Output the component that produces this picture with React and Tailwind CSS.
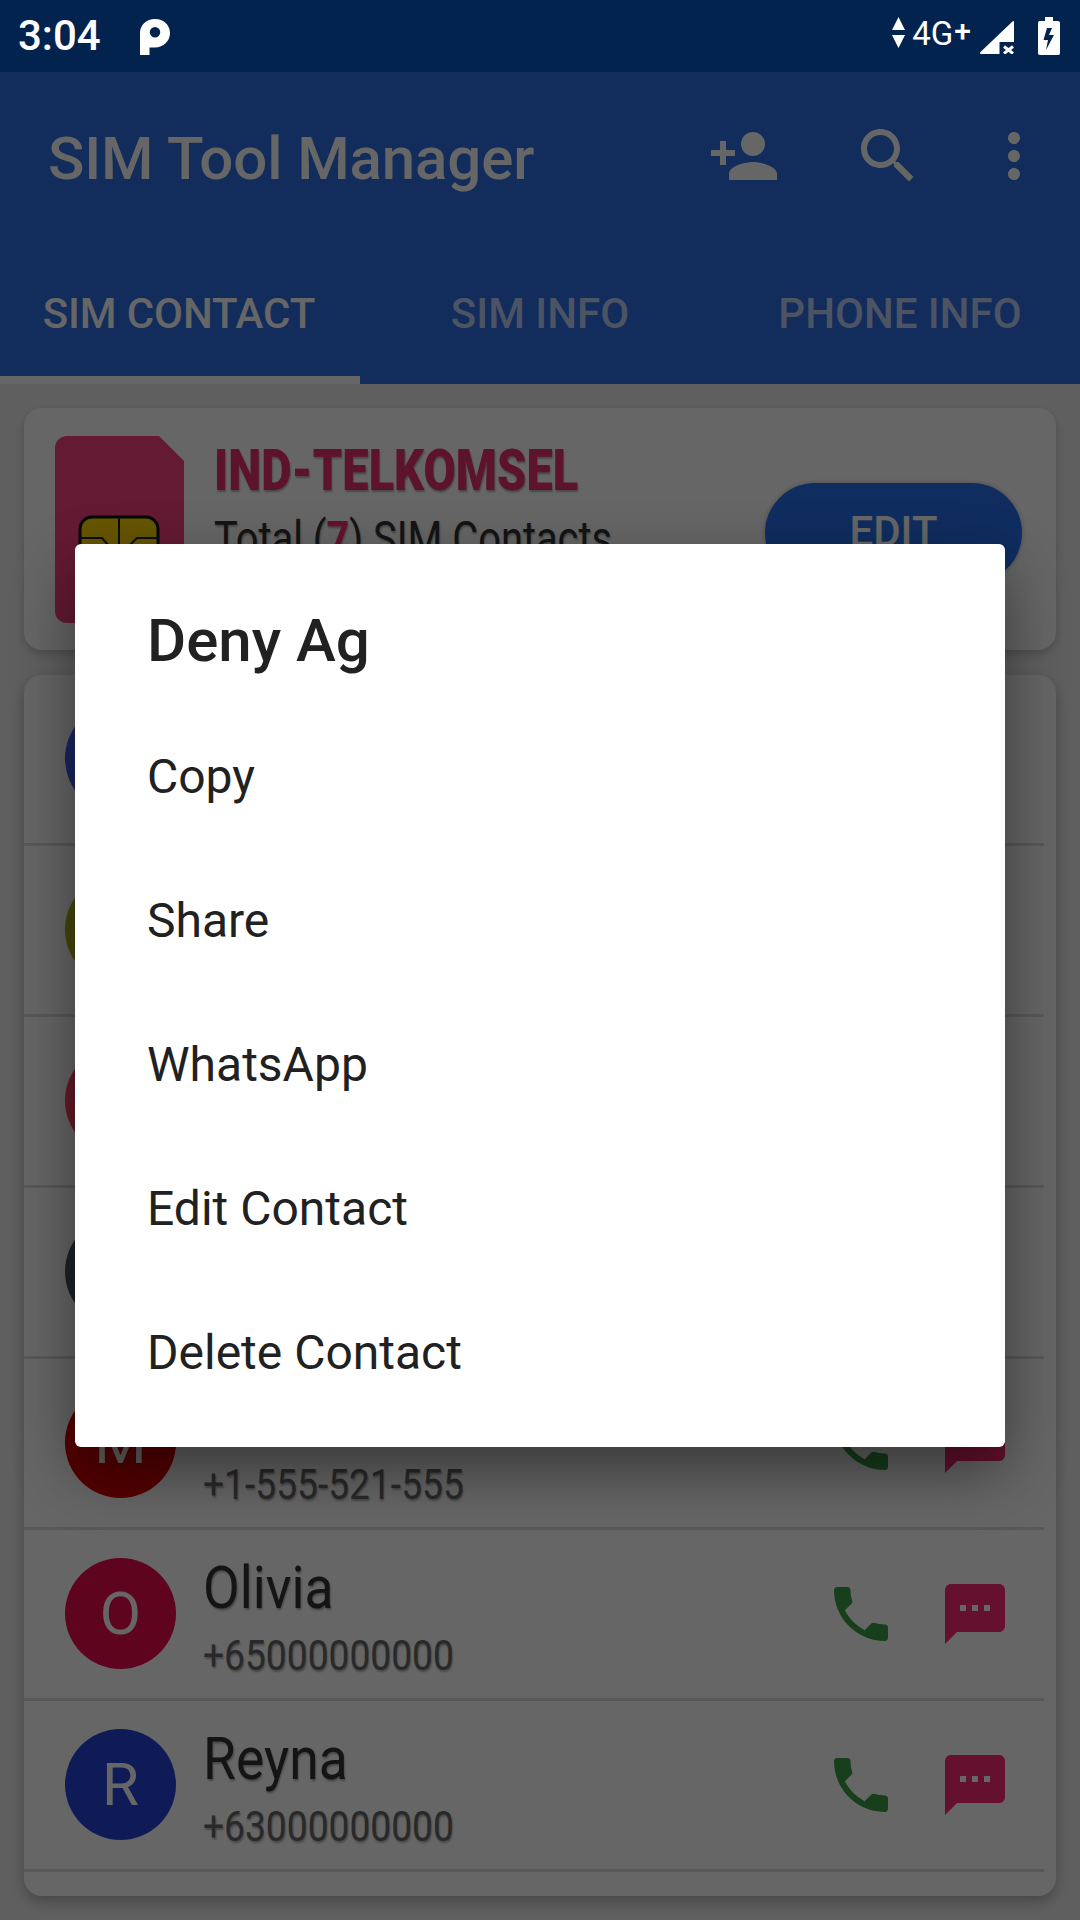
import React from "react";

const contacts = [
  { letter: "D", color: "bg-[#415ff0]", name: "Deny Ag", number: "" },
  { letter: "", color: "bg-[#acb41c]", name: "", number: "" },
  { letter: "", color: "bg-[#ff415f]", name: "", number: "" },
  { letter: "", color: "bg-[#465764]", name: "", number: "" },
  { letter: "M", color: "bg-[#d70000]", name: "", number: "+1-555-521-555" },
  { letter: "O", color: "bg-[#eb0c4e]", name: "Olivia", number: "+65000000000" },
  { letter: "R", color: "bg-[#2344d7]", name: "Reyna", number: "+63000000000" },
];

const menu = ["Copy", "Share", "WhatsApp", "Edit Contact", "Delete Contact"];

const Icon = ({ d, className }) => (
  <svg viewBox="0 0 24 24" className={`w-[72px] h-[72px] shrink-0 ${className}`} fill="currentColor">
    <path d={d} />
  </svg>
);

const StatusBar = () => (
  <div className="h-[72px] bg-[#03234f] flex items-center text-white pl-[18px]">
    <span className="text-[42px] leading-none font-medium">3:04</span>
    <svg viewBox="0 0 30 36" className="w-[30px] h-[36px] ml-[39px] mt-[2px]" fill="white">
      <path
        fillRule="evenodd"
        d="M0 36V14C0 6 6.500 0 15 0s15 6 15 14-6.500 14.500-15 14.500h-5.500V36zM15 8a5 5 0 100 10.500A5 5 0 0015 8z"
      />
    </svg>
    <div className="ml-auto flex items-center pr-[20px]">
      <svg viewBox="0 0 13 31" className="w-[13px] h-[31px] mt-[-7px]" fill="white">
        <path d="M6.500 0L13 13H0zM0 18h13L6.500 31z" />
      </svg>
      <span className="ml-[7px] text-[33px] leading-none mt-[-6px]">4G</span>
      <span className="text-[30px] leading-none font-medium mt-[-11px] ml-[1px]">+</span>
      <svg viewBox="0 0 34 33" className="w-[34px] h-[33px] ml-[9px] mt-[2px]" fill="white">
        <path d="M33 0c.600 0 1 .500 1 1v20H19.500v12H1c-1 0-1.300-1-.500-2z" />
        <path d="M24 25.500l9 7M33 25.500l-9 7" stroke="white" strokeWidth="3" fill="none" />
      </svg>
      <svg viewBox="0 0 22 38" className="w-[22px] h-[38px] ml-[24px] mt-[-1px]" fill="white">
        <path
          fillRule="evenodd"
          d="M7 0h8v4h5c1.500 0 2 1 2 2v30c0 1.500-1 2-2 2H2c-1.500 0-2-1-2-2V6c0-1.500 1-2 2-2h5zM9 11l-3.500 12H10l-2 10 8-15h-5l3-7z"
        />
      </svg>
    </div>
  </div>
);

const AppBar = () => (
  <div className="bg-[#2d6ee6] text-white">
    <div className="h-[168px] flex items-center pl-[48px] pr-[30px]">
      <div className="text-[60px] leading-none font-medium tracking-[-0.1px] mt-[5px]">SIM Tool Manager</div>
      <Icon
        className="ml-auto"
        d="M15 12c2.210 0 4-1.790 4-4s-1.790-4-4-4-4 1.790-4 4 1.790 4 4 4zm-9-2V7H4v3H1v2h3v3h2v-3h3v-2H6zm9 4c-2.670 0-8 1.340-8 4v2h16v-2c0-2.660-5.330-4-8-4z"
      />
      <Icon
        className="ml-[72px]"
        d="M15.500 14h-.790l-.280-.270C15.410 12.590 16 11.110 16 9.500 16 5.910 13.090 3 9.500 3S3 5.910 3 9.500 5.910 16 9.500 16c1.610 0 3.090-.590 4.230-1.570l.270.280v.790l5 4.990L20.490 19l-4.990-5zm-6 0C7.010 14 5 11.990 5 9.500S7.010 5 9.500 5 14 7.010 14 9.500 11.990 14 9.500 14z"
      />
      <Icon
        className="ml-[54px]"
        d="M12 8c1.100 0 2-.900 2-2s-.900-2-2-2-2 .900-2 2 .900 2 2 2zm0 2c-1.100 0-2 .900-2 2s.900 2 2 2 2-.900 2-2-.900-2-2-2zm0 6c-1.100 0-2 .900-2 2s.900 2 2 2 2-.900 2-2-.900-2-2-2z"
      />
    </div>
    <div className="grid grid-cols-3 h-[144px] text-[42px] font-medium">
      <div className="flex items-center justify-center border-b-[8px] border-white pt-[10px] pr-[2px] tracking-[-0.1px]">
        SIM CONTACT
      </div>
      <div className="flex items-center justify-center text-white/70 pt-[2px]">SIM INFO</div>
      <div className="flex items-center justify-center text-white/70 pt-[2px]">PHONE INFO</div>
    </div>
  </div>
);

const SimCard = () => (
  <div className="mt-[24px] mx-[24px] h-[242px] bg-white rounded-[18px] shadow-[0_4px_10px_rgba(0,0,0,0.2)] flex items-start pl-[31px] pt-[28px] pr-[34px]">
    <svg viewBox="0 0 129 187" className="w-[129px] h-[187px] shrink-0">
      <path d="M12 0H104L129 25V175a12 12 0 01-12 12H12A12 12 0 010 175V12A12 12 0 0112 0z" fill="#fa4180" />
      <rect x="25" y="81" width="78" height="78" rx="12" fill="#ffd700" stroke="#111" strokeWidth="3" />
      <path d="M64 81V110M25 102H47L54 110V150M103 102H82L74 110V150" fill="none" stroke="#222" strokeWidth="2" />
    </svg>
    <div className="ml-[30px] min-w-0 whitespace-nowrap">
      <div className="mt-[1px] text-[58px] leading-[66px] font-black text-[#e8306f] origin-left scale-x-[0.81] [text-shadow:1px_2px_2px_rgba(0,0,0,0.3)]">
        IND-TELKOMSEL
      </div>
      <div className="mt-[8px] text-[48px] leading-[56px] text-[#333] origin-left scale-x-[0.83] [text-shadow:1px_2px_2px_rgba(0,0,0,0.3)]">
        Total (<span className="text-[#fa2873] font-bold">7</span>) SIM Contacts
      </div>
    </div>
    <div className="ml-auto mt-[47px] w-[257px] h-[100px] shrink-0 rounded-full bg-[#2670ee] shadow-[0_0_3px_2px_rgba(0,0,0,0.12)] text-white text-[42px] font-medium flex items-center justify-center pb-[4px]">
      EDIT
    </div>
  </div>
);

const ContactRow = ({ contact }) => (
  <div className="h-[171px] border-b-[3px] border-[#dcdcdc] mr-[12px] pl-[41px] pr-[33px] flex items-center">
    <div
      className={`w-[111px] h-[111px] mb-[1px] rounded-full shrink-0 flex items-center justify-center text-white text-[60px] leading-none ${contact.color}`}
    >
      {contact.letter}
    </div>
    <div className="ml-[27px] min-w-0 whitespace-nowrap [text-shadow:1px_2px_2px_rgba(0,0,0,0.3)]">
      <div className="h-[72px] mt-[4px] text-[60px] leading-[72px] text-[#333] origin-left scale-x-[0.89]">{contact.name}</div>
      <div className="mt-[7px] h-[50px] text-[42px] leading-[50px] text-[#666] origin-left scale-x-[0.885]">
        {contact.number}
      </div>
    </div>
    <Icon
      className="ml-auto text-[#3a9e44]"
      d="M6.620 10.790c1.440 2.830 3.760 5.140 6.590 6.590l2.200-2.200c.270-.270.670-.360 1.020-.240 1.120.370 2.330.570 3.570.570.550 0 1 .450 1 1V20c0 .550-.450 1-1 1-9.390 0-17-7.610-17-17 0-.550.450-1 1-1h3.500c.550 0 1 .450 1 1 0 1.250.200 2.450.570 3.570.110.350.030.740-.250 1.020l-2.200 2.200z"
    />
    <Icon
      className="ml-[42px] text-[#fa2873]"
      d="M20 2H4c-1.100 0-1.990.900-1.990 2L2 22l4-4h14c1.100 0 2-.900 2-2V4c0-1.100-.900-2-2-2zM9 11H7V9h2v2zm4 0h-2V9h2v2zm4 0h-2V9h2v2z"
    />
  </div>
);

const Dialog = () => (
  <div className="w-[930px] h-[903px] mb-[1px] bg-white rounded-[6px] shadow-[0_24px_60px_rgba(0,0,0,0.45)] flex flex-col text-[#212121]">
    <div className="h-[161px] pl-[72px] pt-[62px] text-[60px] leading-[70px] font-medium">Deny Ag</div>
    {menu.map((item) => (
      <div key={item} className="h-[144px] pl-[72px] flex items-center text-[48px] leading-none">
        {item}
      </div>
    ))}
  </div>
);

const App = () => {
  return (
    <div className="relative w-[1080px] h-[1920px] overflow-hidden bg-[#eeeeee] font-['Roboto',sans-serif]">
      <StatusBar />
      <AppBar />
      <SimCard />
      <div className="mt-[25px] mx-[24px] h-[1221px] bg-white rounded-[18px] shadow-[0_6px_14px_rgba(0,0,0,0.25)]">
        {contacts.map((c, i) => (
          <ContactRow key={i} contact={c} />
        ))}
      </div>
      <div className="absolute inset-x-0 top-[72px] bottom-0 bg-black/60 flex items-center justify-center">
        <Dialog />
      </div>
    </div>
  );
};

export default App;
